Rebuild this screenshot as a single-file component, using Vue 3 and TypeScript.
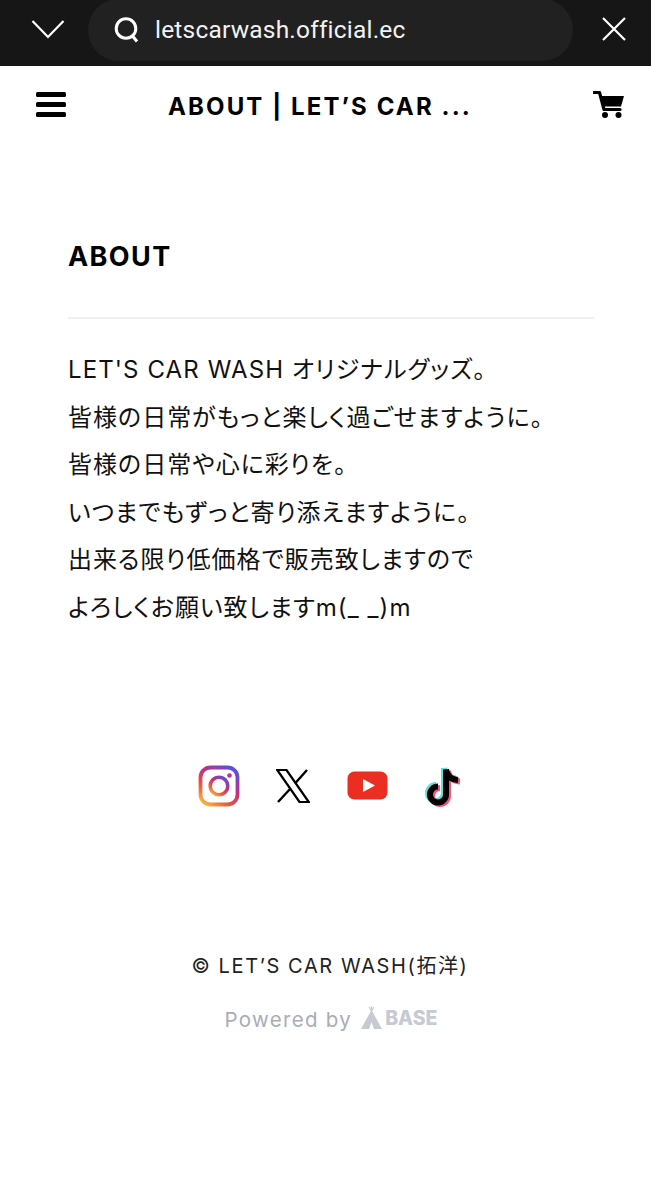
<script setup lang="ts">
interface Segment { text: string; latin: boolean }
const lines: Segment[][] = [
  [{ text: "LET'S CAR WASH", latin: true }, { text: ' オリジナルグッズ。', latin: false }],
  [{ text: '皆様の日常がもっと楽しく過ごせますように。', latin: false }],
  [{ text: '皆様の日常や心に彩りを。', latin: false }],
  [{ text: 'いつまでもずっと寄り添えますように。', latin: false }],
  [{ text: '出来る限り低価格で販売致しますので', latin: false }],
  [{ text: 'よろしくお願い致します', latin: false }, { text: 'm(_ _)m', latin: true }],
]
</script>

<template>
  <div class="page">
    <div class="browser">
      <svg class="chev" width="34" height="20" viewBox="0 0 34 20"><path d="M1.5 2 L17 18 L32.5 2" fill="none" stroke="#fff" stroke-width="2.2"/></svg>
      <div class="pill">
        <svg width="26" height="28" viewBox="0 0 26 28"><circle cx="12" cy="12.5" r="9.8" fill="none" stroke="#fff" stroke-width="3"/><path d="M18.5 20 L23 25.5" stroke="#fff" stroke-width="3"/></svg>
        <span class="url">letscarwash.official.ec</span>
      </div>
      <svg class="close" width="26" height="26" viewBox="0 0 26 26"><path d="M2 2 L24 24 M24 2 L2 24" stroke="#fff" stroke-width="2.2"/></svg>
    </div>

    <header class="head">
      <div class="burger"><i></i><i></i><i></i></div>
      <div class="title">ABOUT | LET’S CAR ...</div>
      <svg class="cart" width="32" height="30" viewBox="0 0 32 30">
        <path d="M1 2.5 H6.5 L11 19.5 H27" fill="none" stroke="#000" stroke-width="3.2" stroke-linejoin="round" stroke-linecap="round"/>
        <path d="M7.5 6 H31 L28 16.5 H10.5 Z" fill="#000"/>
        <circle cx="12" cy="25" r="3" fill="#000"/><circle cx="25.5" cy="25" r="3" fill="#000"/>
      </svg>
    </header>

    <main class="main">
      <h1 class="h1">ABOUT</h1>
      <hr class="rule" />
      <p v-for="(l, i) in lines" :key="i" class="line"><span v-for="s in l" :key="s.text" :class="{ latin: s.latin }">{{ s.text }}</span></p>
    </main>

    <div class="social">
      <svg width="42" height="42" viewBox="0 0 42 42">
        <defs>
          <linearGradient id="ig" x1="0.15" y1="1" x2="0.85" y2="0">
            <stop offset="0" stop-color="#f5b041"/><stop offset="0.3" stop-color="#e8553f"/><stop offset="0.6" stop-color="#c1307f"/><stop offset="1" stop-color="#5b51d8"/>
          </linearGradient>
        </defs>
        <rect x="2.5" y="2.5" width="37" height="37" rx="10" fill="none" stroke="url(#ig)" stroke-width="3.8"/>
        <circle cx="21" cy="21" r="8.8" fill="none" stroke="url(#ig)" stroke-width="3.6"/>
        <circle cx="31.5" cy="10.5" r="2.3" fill="#b5358f"/>
      </svg>
      <svg width="34" height="34" viewBox="0 0 34 34">
        <path d="M1.2 1 H10.5 L32.8 33 H23.5 Z" fill="none" stroke="#000" stroke-width="2.2"/>
        <path d="M31 1 L19 14.5 M14.5 19.5 L2 33" stroke="#000" stroke-width="2.4"/>
      </svg>
      <svg class="yt" width="41" height="29" viewBox="0 0 41 29">
        <rect x="0.5" y="0.5" width="40" height="28" rx="7" fill="#ea2e21"/>
        <path d="M16 8 L28 14.5 L16 21 Z" fill="#fff"/>
      </svg>
      <svg class="tt" width="38" height="42" viewBox="0 0 38 42">
        <g fill="none" stroke-width="6">
          <path d="M21 3 V28 a8 8 0 1 1 -8 -8" stroke="#5fe0dc"/>
          <path d="M21 3 C22 10 27 13 33 13.5" stroke="#5fe0dc"/>
          <path d="M25 6 V31 a8 8 0 1 1 -8 -8" stroke="#f0557a"/>
          <path d="M25 6 C26 13 31 16 37 16.5" stroke="#f0557a"/>
          <path d="M23 4.5 V29.5 a8 8 0 1 1 -8 -8" stroke="#000"/>
          <path d="M23 4.5 C24 11.5 29 14.5 35 15" stroke="#000"/>
        </g>
      </svg>
    </div>

    <footer class="foot">
      <div class="copy">© LET’S CAR WASH(拓洋)</div>
      <div class="powered">
        <span>Powered by</span>
        <svg class="tipi" width="21" height="23" viewBox="0 0 21 23"><path d="M10.5 0 V6 M8 1 L10.5 5 L13 1" stroke="#c6cad2" stroke-width="1.2" fill="none"/><path d="M10.5 4 L21 23 H13 L10.5 16 L8 23 H0 Z" fill="#c6cad2"/></svg>
        <span class="base">BASE</span>
      </div>
    </footer>
  </div>
</template>

<style>
html, body { margin: 0; background: #fff; }
</style>

<style scoped>
.page {
  width: 651px;
  height: 1200px;
  overflow: hidden;
  background: #fff;
  font-family: Inter, "Noto Sans CJK JP", sans-serif;
  color: #111;
}
.browser {
  height: 66px;
  background: #161616;
  display: flex;
  align-items: flex-start;
  box-sizing: border-box;
  padding-left: 31px;
}
.chev { margin-top: 19px; }
.pill {
  margin-left: 23px;
  width: 485px;
  height: 62px;
  background: #212121;
  border-radius: 31px;
  margin-top: -1px;
  display: flex;
  align-items: center;
  padding-left: 26px;
  box-sizing: border-box;
}
.url {
  margin-left: 15px;
  margin-top: -1px;
  color: #f2f2f2;
  font-size: 24.5px;
  font-family: Roboto, sans-serif;
  letter-spacing: 0.2px;
}
.close { margin-left: 28px; margin-top: 16px; }
.head {
  height: 80px;
  display: flex;
  align-items: center;
  justify-content: space-between;
  padding: 0 26px 0 36px;
}
.burger { width: 30px; display: flex; flex-direction: column; gap: 4.5px; margin-top: -3px; }
.burger i { display: block; height: 5.5px; background: #000; border-radius: 1.5px; }
.title {
  font-size: 24px;
  font-weight: 700;
  letter-spacing: 2.1px;
  color: #000;
  white-space: nowrap;
  font-family: Inter, sans-serif;
  margin-right: 19px;
}
.cart { margin-top: -3px; }
.main { padding: 0 57px 0 68px; }
.h1 {
  margin: 0;
  padding-top: 93px;
  font-size: 27px;
  line-height: 36px;
  font-weight: 700;
  color: #000;
  letter-spacing: 1.4px;
}
.rule { border: 0; height: 2px; background: #f0f0f2; margin: 42px 0 27px; }
.line {
  margin: 0;
  font-size: 24px;
  line-height: 47.6px;
  color: #111;
  white-space: nowrap;
  letter-spacing: 1px;
  font-feature-settings: "palt";
}
.latin { letter-spacing: 1.1px; }
.social {
  margin-top: 133px;
  height: 42px;
  display: flex;
  align-items: center;
  padding-left: 198px;
  gap: 36px;
}
.yt { margin-left: 1px; }
.tt { margin-left: -1px; }
.foot { margin-top: 144px; text-align: center; padding-left: 9px; }
.copy { font-size: 20px; line-height: 30px; letter-spacing: 1.6px; color: #222; }
.powered {
  margin-top: 26px;
  padding-left: 2px;
  display: flex;
  justify-content: center;
  align-items: center;
  gap: 9px;
  color: #a9adb5;
  font-size: 20.5px;
  letter-spacing: 1.3px;
}
.tipi { margin-top: -4px; }
.base { font-weight: 800; color: #c6cad2; letter-spacing: 0; margin-left: -6px; font-size: 19.5px; margin-top: -2px; }
</style>
